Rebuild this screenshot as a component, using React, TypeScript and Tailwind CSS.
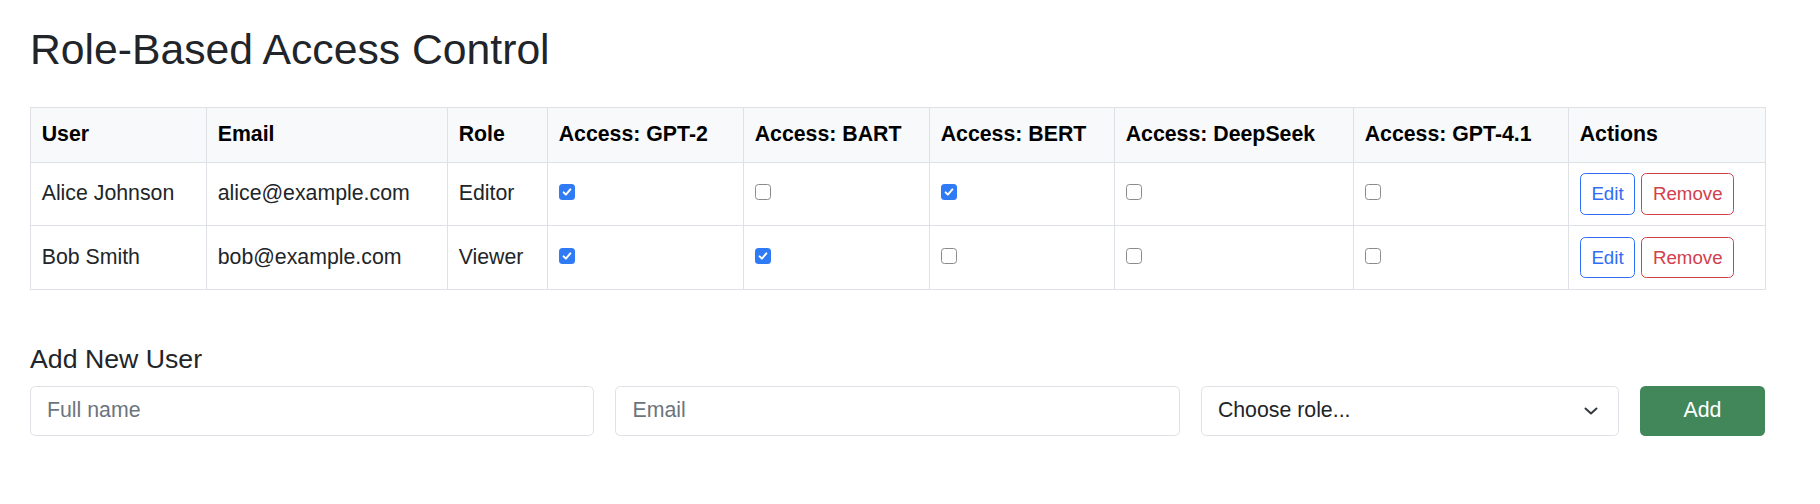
import React from 'react';

type User = {
  name: string;
  email: string;
  role: string;
  access: boolean[];
};

const MODELS = ['GPT-2', 'BART', 'BERT', 'DeepSeek', 'GPT-4.1'];

const USERS: User[] = [
  { name: 'Alice Johnson', email: 'alice@example.com', role: 'Editor', access: [true, false, true, false, false] },
  { name: 'Bob Smith', email: 'bob@example.com', role: 'Viewer', access: [true, true, false, false, false] },
];

// column widths measured off the screenshot
const COL_WIDTHS = ['w-[176px]', 'w-[241px]', 'w-[100px]', 'w-[196px]', 'w-[186px]', 'w-[185px]', 'w-[239px]', 'w-[215px]', 'w-[197px]'];

const Check = ({ checked }: { checked: boolean }) =>
  checked ? (
    <span className="mb-[4px] inline-flex h-[16px] w-[16px] items-center justify-center rounded-[3.5px] bg-[#2f7bf6] align-middle">
      <svg viewBox="0 0 16 16" className="h-[12px] w-[12px]" fill="none" stroke="white" strokeWidth={2.6} strokeLinecap="round" strokeLinejoin="round">
        <path d="M3.5 8.5l3 3 6-7" />
      </svg>
    </span>
  ) : (
    <span className="mb-[4px] inline-block h-[16px] w-[16px] rounded-[3.5px] border border-[#8a8a8a] bg-white align-middle" />
  );

export default function App() {
  return (
    <div className="min-h-[504px] bg-white pl-[30px] pr-[55px] pt-[24px] font-['Liberation_Sans',Arial,sans-serif] text-[#212529]">
      <h2 className="mb-[32px] text-[42.7px] leading-[1.2] font-medium">Role-Based Access Control</h2>

      <table className="w-[1735px] table-fixed border-collapse text-[21.3px] leading-[1.5]">
        <thead>
          <tr className="bg-[#f8f9fa]">
            {['User', 'Email', 'Role', ...MODELS.map(m => `Access: ${m}`), 'Actions'].map((h, i) => (
              <th key={h} className={`${COL_WIDTHS[i]} border border-[#dee2e6] px-[10.7px] py-[10.7px] text-left align-middle font-bold text-black`}>
                {h}
              </th>
            ))}
          </tr>
        </thead>
        <tbody>
          {USERS.map(user => (
            <tr key={user.email}>
              <td className="border border-[#dee2e6] px-[10.7px] py-[10.7px] align-middle">{user.name}</td>
              <td className="border border-[#dee2e6] px-[10.7px] py-[10.7px] align-middle">{user.email}</td>
              <td className="border border-[#dee2e6] px-[10.7px] py-[10.7px] align-middle">{user.role}</td>
              {user.access.map((a, i) => (
                <td key={i} className="border border-[#dee2e6] px-[10.7px] py-[10.7px] align-middle">
                  <Check checked={a} />
                </td>
              ))}
              <td className="border border-[#dee2e6] px-[10.7px] py-[10.7px] align-middle">
                <div className="flex gap-[6px]">
                  <button className="h-[41.3px] rounded-[5.3px] border border-[#2f6df6] px-[10.7px] text-[18.7px] text-[#2f6df6]">Edit</button>
                  <button className="h-[41.3px] rounded-[5.3px] border border-[#d2404b] px-[10.7px] text-[18.7px] text-[#d2404b]">Remove</button>
                </div>
              </td>
            </tr>
          ))}
        </tbody>
      </table>

      <h5 className="mt-[53px] mb-[10.7px] text-[26.7px] leading-[1.2] font-medium">Add New User</h5>

      <div className="grid w-[1735px] grid-cols-12 gap-x-[21.33px]">
        <input
          placeholder="Full name"
          className="col-span-4 h-[50.7px] rounded-[5.3px] border border-[#dee2e6] px-[16px] text-[21.3px] outline-none placeholder:text-[#6c757d]"
        />
        <input
          placeholder="Email"
          className="col-span-4 h-[50.7px] rounded-[5.3px] border border-[#dee2e6] px-[16px] text-[21.3px] outline-none placeholder:text-[#6c757d]"
        />
        <div className="relative col-span-3">
          <select className="h-[50.7px] w-full appearance-none rounded-[5.3px] border border-[#dee2e6] bg-white pl-[16px] pr-[48px] text-[21.3px] text-[#212529] outline-none">
            <option>Choose role...</option>
            <option>Admin</option>
            <option>Editor</option>
            <option>Viewer</option>
          </select>
          <svg viewBox="0 0 14 8" className="pointer-events-none absolute right-[21px] top-1/2 h-[8px] w-[14px] -translate-y-1/2" fill="none" stroke="#343a40" strokeWidth={2} strokeLinecap="round" strokeLinejoin="round">
            <path d="M1.5 1.5l5.5 5 5.5-5" />
          </svg>
        </div>
        <button className="col-span-1 h-[50.7px] rounded-[5.3px] bg-[#41875a] text-[21.3px] text-white">Add</button>
      </div>
    </div>
  );
}
